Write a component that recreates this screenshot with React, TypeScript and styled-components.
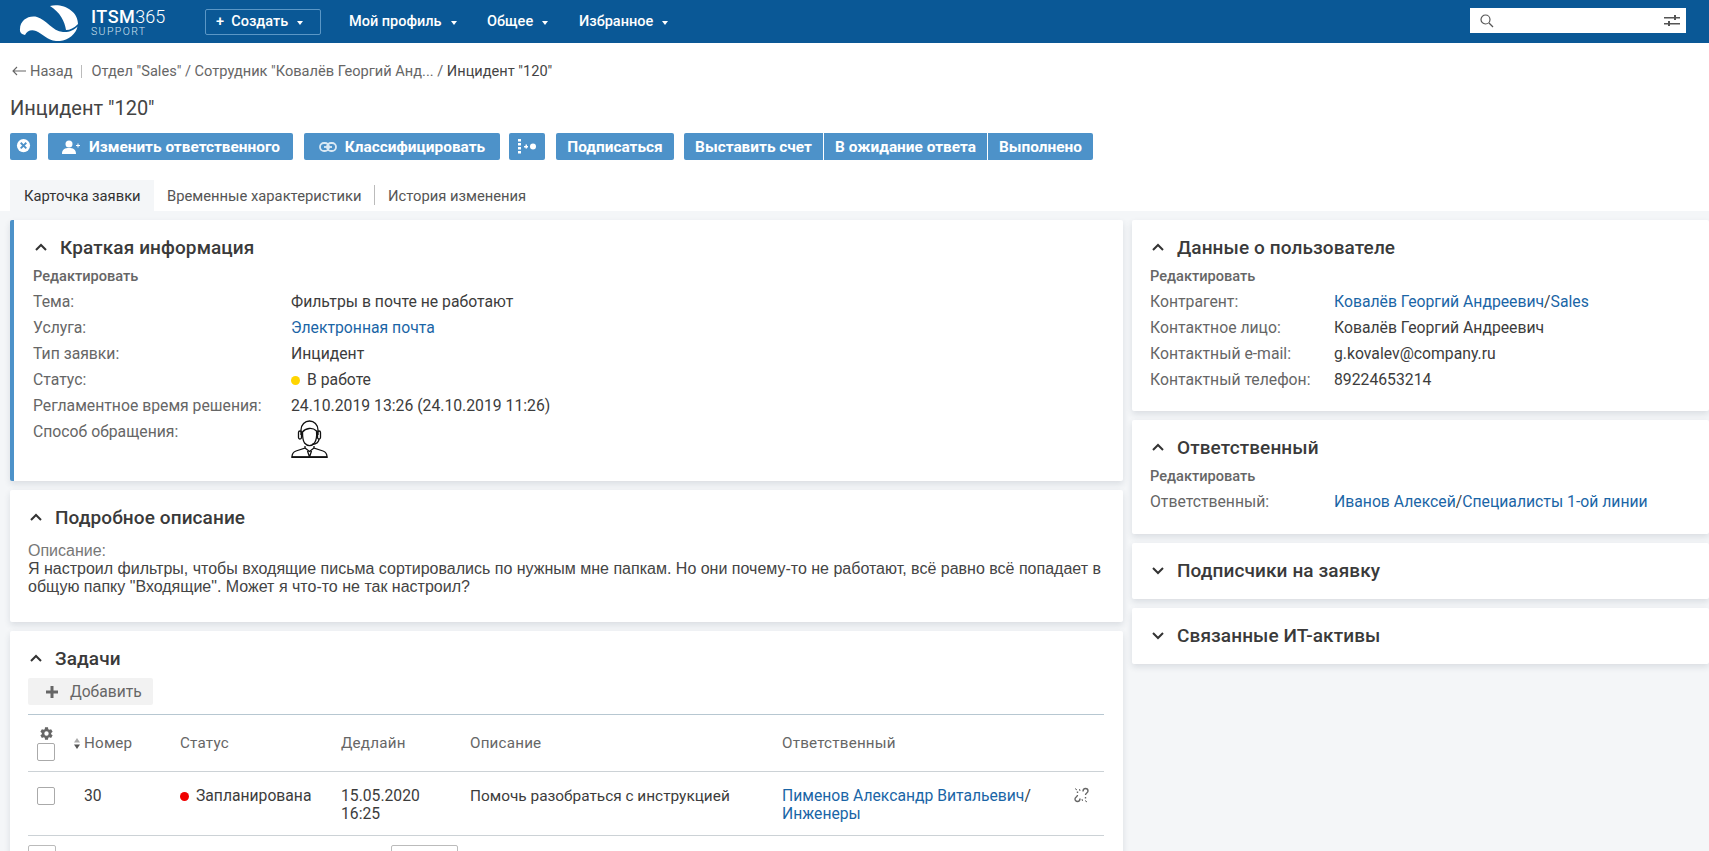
import React from "react";
import styled, { createGlobalStyle } from "styled-components";

const Global = createGlobalStyle`
  html, body { margin: 0; padding: 0; height: 851px; overflow: hidden; background: #f4f6f8; }
  body { font-family: Roboto, "Liberation Sans", sans-serif; font-size: 15px; color: #333; }
  * { box-sizing: border-box; }
  #root { height: 851px; overflow: hidden; }
`;

const TopBar = styled.header`
  height: 43px; background: #0a5896; display: flex; align-items: center; padding-left: 19px; color: #fff;
`;
const LogoMark = styled.svg`width: 60px; height: 38px; flex: none;`;
const Brand = styled.div`
  margin-left: 12px; width: 114px; display: flex; flex-direction: column; line-height: 1; flex: none;
`;
const BrandTop = styled.div`
  font-size: 18px; font-weight: 500; letter-spacing: .5px; height: 17px; line-height: 17px; white-space: nowrap;
  span { font-weight: 300; letter-spacing: 0; }
`;
const BrandSub = styled.div`font-size: 10.5px; font-weight: 300; letter-spacing: 1.4px; color: #d5e4f0; height: 10px; line-height: 11px; margin-top: 1px;`;
const CreateButton = styled.div`
  width: 116px; height: 26px; border: 1px solid #5b97c6; border-radius: 2px;
  display: flex; align-items: center; padding-left: 10px; font-size: 14.5px; font-weight: 500; white-space: nowrap; flex: none;
`;
const Caret = styled.i`
  display: inline-block; width: 0; height: 0; margin-left: 9px; margin-top: 3px;
  border-left: 3.5px solid transparent; border-right: 3.5px solid transparent; border-top: 4.5px solid currentColor;
`;
const NavList = styled.nav`display: flex; margin-left: 28px; flex: 1;`;
const NavItem = styled.div<{ $w: number }>`
  width: ${p => p.$w}px; font-size: 14.5px; font-weight: 500; white-space: nowrap; display: flex; align-items: center;
`;
const SearchBox = styled.div`
  width: 216px; height: 25px; margin-top: -2px; margin-right: 23px; background: #fff; display: flex; align-items: center;
  justify-content: space-between; padding: 0 6px 0 10px; color: #555;
`;

const Page = styled.div`background: #fff; height: 168px;`;
const Crumbs = styled.div`
  height: 54px; padding: 18px 0 0 12px; display: flex; align-items: flex-start; font-size: 14.6px; line-height: 20px; color: #666; white-space: nowrap;
`;
const BackArrow = styled.svg`width: 14px; height: 10px; margin: 5px 4px 0 0; flex: none;`;
const Divider = styled.span`width: 1px; height: 13px; background: #bbb; margin: 4px 10px 0 8px;`;
const CrumbCurrent = styled.span`color: #444;`;
const PageTitle = styled.h1`
  margin: 0; height: 36px; padding-left: 10px; font-size: 20px; font-weight: 400; line-height: 22px; color: #444;
`;
const Toolbar = styled.div`display: flex; padding-left: 10px; height: 27px;`;
const ActionButton = styled.button<{ $w: number; $gap?: number; $join?: "left" | "mid" | "right" }>`
  width: ${p => p.$w}px; height: 27px; margin: 0 ${p => p.$gap ?? 0}px 0 0; border: 0; background: #4d92c9; color: #fff;
  font-family: Roboto, sans-serif; font-size: 15.4px; font-weight: 700; white-space: nowrap; padding: 0;
  display: flex; align-items: center; justify-content: center; gap: 8px; flex: none;
  border-radius: ${p => p.$join === "mid" ? "0" : p.$join === "left" ? "2px 0 0 2px" : p.$join === "right" ? "0 2px 2px 0" : "2px"};
  ${p => p.$join && p.$join !== "right" ? "border-right: 1px solid #fff;" : ""}
`;
const TabBar = styled.div`display: flex; padding: 20px 0 0 10px; height: 51px;`;
const Tab = styled.div<{ $active?: boolean; $w: number; $sep?: boolean }>`
  width: ${p => p.$w}px; height: 31px; padding-left: ${p => p.$active ? 14 : 13}px; line-height: 33px; font-size: 14.75px; white-space: nowrap;
  background: ${p => p.$active ? "#f4f6f8" : "transparent"}; color: ${p => p.$active ? "#333" : "#555"};
  ${p => p.$sep ? "position: relative; &::after { content: ''; position: absolute; right: 0; top: 5px; height: 20px; width: 1px; background: #bbb; }" : ""}
`;

const Main = styled.main`
  display: grid; grid-template-columns: 1113px 577px; column-gap: 9px; padding: 9px 0 0 10px; background: #f4f6f8; align-items: start;
`;
const Column = styled.div`display: flex; flex-direction: column; gap: 9px;`;
const Card = styled.section<{ $accent?: boolean; $pad: number; $pb: number; $h?: number }>`
  background: #fff; border-radius: 2px; padding: 15px 0 ${p => p.$pb}px ${p => p.$pad}px;
  box-shadow: 0 3px 6px rgba(30, 50, 70, .12);
  ${p => p.$accent ? "border-left: 4px solid #4d92c9;" : ""}
  ${p => p.$h ? `height: ${p.$h}px;` : ""}
`;
const CardHead = styled.div`
  display: flex; align-items: center; height: 24px; gap: 12px; padding-left: 1px; font-size: 19px; font-weight: 500; color: #3a3a3a; letter-spacing: .1px; white-space: nowrap;
`;
const Chevron = styled.svg`width: 14px; height: 14px; flex: none;`;
const EditLink = styled.div`height: 26px; margin-top: 4px; line-height: 26px; font-size: 14.6px; font-weight: 500; color: #666;`;
const FieldRow = styled.div<{ $label: number }>`
  display: grid; grid-template-columns: ${p => p.$label}px 1fr; min-height: 26px; line-height: 26px; font-size: 15.75px; white-space: nowrap;
`;
const FieldLabel = styled.div`color: #666;`;
const FieldValue = styled.div`color: #3c3c3c; display: flex; align-items: center;`;
const Link = styled.a`color: #1a65a6; text-decoration: none;`;
const Dot = styled.i<{ $c: string }>`
  display: inline-block; width: 9px; height: 9px; border-radius: 50%; background: ${p => p.$c}; margin-right: 7px; flex: none;
`;
const AgentIcon = styled.svg`display: block; width: 37px; height: 38px; margin-top: 1px;`;

const DescriptionText = styled.div`
  margin-top: 13px; padding-right: 10px; font-family: "Liberation Sans", Arial, sans-serif; font-size: 16px; line-height: 18px; color: #444;
  span { color: #777; display: block; }
`;

const AddButton = styled.div`
  width: 125px; height: 27px; margin-top: 8px; background: #f2f2f2; border-radius: 2px; display: flex; align-items: center;
  padding-left: 18px; gap: 12px; font-size: 15.6px; font-weight: 400; color: #666;
`;
const Table = styled.div`margin-top: 9px; width: 1076px; font-size: 15.7px;`;
const GridRow = styled.div<{ $head?: boolean }>`
  display: grid; grid-template-columns: 45px 107px 161px 129px 312px 291px 31px;
  ${p => p.$head ? "height: 58px; border-top: 1px solid #b7c7d1; border-bottom: 1px solid #ccd2d6; align-items: center; color: #666; font-size: 15.2px; letter-spacing: .2px;"
    : "height: 64px; border-bottom: 1px solid #ccd2d6; padding-top: 15px; line-height: 18px; color: #3c3c3c;"}
`;
const Check = styled.div`width: 18px; height: 18px; border: 1px solid #aaa; border-radius: 2px; background: #fff;`;
const CheckCell = styled.div`padding-left: 9px; display: flex; flex-direction: column; gap: 2px;`;
const GearHold = styled.div`padding-left: 2px; height: 15px; color: #666;`;
const NumHead = styled.div`display: flex; align-items: center; gap: 3px;`;
const NumCell = styled.div`padding-left: 11px;`;
const StatusCell = styled.div`display: flex; align-items: flex-start; line-height: 18px; white-space: nowrap; i { margin-top: 5px; }`;
const TaskText = styled.div`font-size: 15.4px;`;
const LostIcon = styled.div`padding-left: 1px;`;
const Pager = styled.div`display: flex; padding-top: 9px; gap: 335px;`;
const PagerBox = styled.div<{ $w: number }>`width: ${p => p.$w}px; height: 30px; border: 1px solid #bbb; border-radius: 2px; background: #fff; flex: none;`;

const Up = () => (
  <Chevron viewBox="0 0 14 14" fill="none" stroke="#333" strokeWidth="2"><path d="M2 10 7 5l5 5" /></Chevron>
);
const Down = () => (
  <Chevron viewBox="0 0 14 14" fill="none" stroke="#333" strokeWidth="2"><path d="M2 5 7 10l5-5" /></Chevron>
);

export default function App() {
  return (
    <>
      <Global />
      <TopBar>
        <LogoMark viewBox="0 0 60 38" fill="#fff">
          <path d="M31 3C44 0 59 8 59 21 55 25 51 27 47 27 46 19 41 9 31 3Z" />
          <path d="M1 26C1 17 10 12 18 14 28 17 33 28 44 29 50 29.500 55 27 58.500 23.500 57 32 47 39 37 38 28 37 24 31 17 28 12 26 8 28 6 32 2 31.500 .5 29 1 26Z" />
        </LogoMark>
        <Brand>
          <BrandTop>ITSM<span>365</span></BrandTop>
          <BrandSub>SUPPORT</BrandSub>
        </Brand>
        <CreateButton>+&nbsp; Создать<Caret /></CreateButton>
        <NavList>
          <NavItem $w={138}>Мой профиль<Caret /></NavItem>
          <NavItem $w={92}>Общее<Caret /></NavItem>
          <NavItem $w={120}>Избранное<Caret /></NavItem>
        </NavList>
        <SearchBox>
          <svg width="14" height="14" viewBox="0 0 14 14" fill="none" stroke="#555" strokeWidth="1.2"><circle cx="5.500" cy="5.500" r="4.500" /><path d="m9 9 4 4" /></svg>
          <svg width="16" height="14" viewBox="0 0 16 14" fill="#555"><path d="M0 3h16v1.500H0zM10 1h2v5h-2zM0 9h16v1.500H0zM4 7h2v5H4z" /></svg>
        </SearchBox>
      </TopBar>

      <Page>
        <Crumbs>
          <BackArrow viewBox="0 0 14 10" fill="none" stroke="#666" strokeWidth="1.100"><path d="M14 5H1M5 1 1 5l4 4" /></BackArrow>
          Назад<Divider />
          Отдел "Sales" / Сотрудник "Ковалёв Георгий Анд... /&nbsp;<CrumbCurrent>Инцидент "120"</CrumbCurrent>
        </Crumbs>
        <PageTitle>Инцидент "120"</PageTitle>
        <Toolbar>
          <ActionButton $w={27} $gap={11}>
            <svg width="15" height="15" viewBox="0 0 16 16"><circle cx="8" cy="7" r="7" fill="#fff" /><path d="m5 4 6 6M11 4l-6 6" stroke="#4d92c9" strokeWidth="2" /></svg>
          </ActionButton>
          <ActionButton $w={245} $gap={11}>
            <svg width="20" height="14" viewBox="0 0 20 14" fill="#fff"><circle cx="8" cy="4" r="3.500" /><path d="M1 14c0-5 3-6 7-6s7 1 7 6zM15 5h4v1h-4zM16.500 3.500h1v4h-1z" /></svg>
            Изменить ответственного
          </ActionButton>
          <ActionButton $w={196} $gap={9}>
            <svg width="18" height="10" viewBox="0 0 18 10" fill="none" stroke="#fff" strokeWidth="1.800" opacity=".8"><rect x="1" y="1" width="9" height="8" rx="4" /><rect x="8" y="1" width="9" height="8" rx="4" /><path d="M5 5h8" /></svg>
            Классифицировать
          </ActionButton>
          <ActionButton $w={36} $gap={11}>
            <svg width="19" height="15" viewBox="0 0 19 15" fill="#fff"><path d="M0 0h3v2.500H0zM0 4h3v2.500H0zM0 8h3v2.500H0zM0 12h3v2.500H0zM6 7h4v1.500H6zM7.500 5.500H9v4H7.500z" /><circle cx="15" cy="7.500" r="3" /></svg>
          </ActionButton>
          <ActionButton $w={118} $gap={10}>Подписаться</ActionButton>
          <ActionButton $w={140} $join="left">Выставить счет</ActionButton>
          <ActionButton $w={164} $join="mid">В ожидание ответа</ActionButton>
          <ActionButton $w={105} $join="right">Выполнено</ActionButton>
        </Toolbar>
        <TabBar>
          <Tab $active $w={144}>Карточка заявки</Tab>
          <Tab $w={221} $sep>Временные характеристики</Tab>
          <Tab $w={170}>История изменения</Tab>
        </TabBar>
      </Page>

      <Main>
        <Column>
          <Card $accent $pad={19} $pb={23}>
            <CardHead><Up />Краткая информация</CardHead>
            <EditLink>Редактировать</EditLink>
            <FieldRow $label={258}><FieldLabel>Тема:</FieldLabel><FieldValue>Фильтры в почте не работают</FieldValue></FieldRow>
            <FieldRow $label={258}><FieldLabel>Услуга:</FieldLabel><FieldValue><Link>Электронная почта</Link></FieldValue></FieldRow>
            <FieldRow $label={258}><FieldLabel>Тип заявки:</FieldLabel><FieldValue>Инцидент</FieldValue></FieldRow>
            <FieldRow $label={258}><FieldLabel>Статус:</FieldLabel><FieldValue><Dot $c="#ffd500" />В работе</FieldValue></FieldRow>
            <FieldRow $label={258}><FieldLabel>Регламентное время решения:</FieldLabel><FieldValue>24.10.2019 13:26 (24.10.2019 11:26)</FieldValue></FieldRow>
            <FieldRow $label={258}>
              <FieldLabel>Способ обращения:</FieldLabel>
              <div>
                <AgentIcon viewBox="0 0 37 38" fill="none" stroke="#111" strokeWidth="1.300">
                  <path d="M10 15V10C10 4.500 14 1 18.500 1S27 4.500 27 10v5" />
                  <rect x="7.500" y="11" width="3" height="8" rx="1.500" />
                  <rect x="26.500" y="11" width="3" height="8" rx="1.500" />
                  <path d="M11.500 12c3-4 10-5 14-1 .5 5 0 9-2 12-3 3.500-7 3.500-10 0-2-3-2-7-2-11Z" />
                  <path d="M28 19c0 3-3 5-7 5.500" />
                  <path d="M14 26v2L5 31c-3 1-4 3-4 6h35c0-3-1-5-4-6l-9-3v-2" />
                  <path d="m14 28 4.500 3.500L23 28M16.500 31l2 6M20.500 31l-2 6" />
                  <path d="M.5 37.300h36" strokeWidth="1.600" />
                </AgentIcon>
              </div>
            </FieldRow>
          </Card>

          <Card $pad={18} $pb={26}>
            <CardHead><Up />Подробное описание</CardHead>
            <DescriptionText>
              <span>Описание:</span>
              Я настроил фильтры, чтобы входящие письма сортировались по нужным мне папкам. Но они почему-то не работают, всё равно всё попадает в общую папку "Входящие". Может я что-то не так настроил?
            </DescriptionText>
          </Card>

          <Card $pad={18} $pb={0} $h={240}>
            <CardHead><Up />Задачи</CardHead>
            <AddButton>
              <svg width="12" height="12" viewBox="0 0 12 12" fill="#666"><path d="M4.500 0h3v4.500H12v3H7.500V12h-3V7.500H0v-3h4.500z" /></svg>
              Добавить
            </AddButton>
            <Table>
              <GridRow $head>
                <CheckCell>
                  <GearHold>
                    <svg width="15" height="15" viewBox="0 0 24 24" fill="#666"><path d="M19.400 13a7.700 7.700 0 0 0 0-2l2.400-1.800-2.400-4.200-2.800 1.100a7.600 7.600 0 0 0-1.800-1L14.400 2H9.600l-.4 3.100a7.600 7.600 0 0 0-1.800 1L4.600 5 2.200 9.200 4.600 11a7.700 7.700 0 0 0 0 2l-2.400 1.800L4.600 19l2.800-1.100a7.600 7.600 0 0 0 1.800 1l.4 3.100h4.800l.4-3.100a7.600 7.600 0 0 0 1.800-1l2.800 1.100 2.400-4.200ZM12 15.500a3.500 3.500 0 1 1 0-7 3.500 3.500 0 0 1 0 7Z" /></svg>
                  </GearHold>
                  <Check />
                </CheckCell>
                <NumHead>
                  <svg width="8" height="13" viewBox="0 0 8 13"><path d="M4 1 7 5.500H1Z" fill="#aaa" /><path d="M4 12 7 7.500H1Z" fill="#555" /></svg>
                  Номер
                </NumHead>
                <div>Статус</div>
                <div>Дедлайн</div>
                <div>Описание</div>
                <div>Ответственный</div>
                <div />
              </GridRow>
              <GridRow>
                <CheckCell><Check /></CheckCell>
                <NumCell>30</NumCell>
                <StatusCell><Dot $c="#f00000" />Запланирована</StatusCell>
                <div>15.05.2020<br />16:25</div>
                <TaskText>Помочь разобраться с инструкцией</TaskText>
                <div><Link>Пименов Александр Витальевич</Link>/<br /><Link>Инженеры</Link></div>
                <LostIcon>
                  <svg width="15" height="16" viewBox="0 0 15 16" fill="none" stroke="#666" strokeWidth="1.400">
                    <path d="M9 4.500c0-2 1-3 2.500-3S14 2.500 14 4c0 2-2.500 2-2.500 4M11.500 10v1.500" />
                    <path d="M6 11.500c0 2-1 3-2.500 3S1 13.500 1 12c0-2 2.500-2 2.500-4M3.500 6V4.500" />
                    <path d="M5.500 2 6 4M1 1.500l2 1.500M13 15l-2-1.500M8.500 14l-.5-2" strokeWidth="1" />
                  </svg>
                </LostIcon>
              </GridRow>
              <Pager><PagerBox $w={28} /><PagerBox $w={67} /></Pager>
            </Table>
          </Card>
        </Column>

        <Column>
          <Card $pad={18} $pb={18}>
            <CardHead><Up />Данные о пользователе</CardHead>
            <EditLink>Редактировать</EditLink>
            <FieldRow $label={184}><FieldLabel>Контрагент:</FieldLabel><FieldValue><Link>Ковалёв Георгий Андреевич</Link>/<Link>Sales</Link></FieldValue></FieldRow>
            <FieldRow $label={184}><FieldLabel>Контактное лицо:</FieldLabel><FieldValue>Ковалёв Георгий Андреевич</FieldValue></FieldRow>
            <FieldRow $label={184}><FieldLabel>Контактный e-mail:</FieldLabel><FieldValue>g.kovalev@company.ru</FieldValue></FieldRow>
            <FieldRow $label={184}><FieldLabel>Контактный телефон:</FieldLabel><FieldValue>89224653214</FieldValue></FieldRow>
          </Card>
          <Card $pad={18} $pb={19}>
            <CardHead><Up />Ответственный</CardHead>
            <EditLink>Редактировать</EditLink>
            <FieldRow $label={184}><FieldLabel>Ответственный:</FieldLabel><FieldValue><Link>Иванов Алексей</Link>/<Link>Специалисты 1-ой линии</Link></FieldValue></FieldRow>
          </Card>
          <Card $pad={18} $pb={17}>
            <CardHead><Down />Подписчики на заявку</CardHead>
          </Card>
          <Card $pad={18} $pb={17}>
            <CardHead><Down />Связанные ИТ-активы</CardHead>
          </Card>
        </Column>
      </Main>
    </>
  );
}
